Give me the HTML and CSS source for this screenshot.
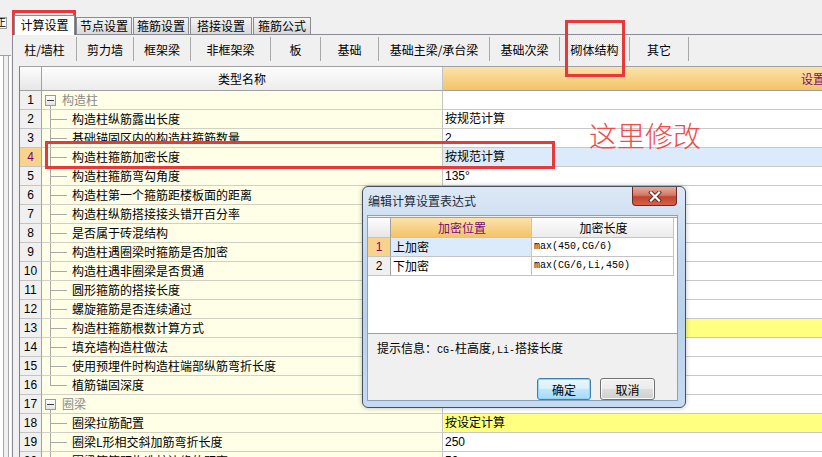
FILE: index.html
```html
<!DOCTYPE html>
<html lang="zh-CN">

<head>
    <meta charset="UTF-8" />
    <title>计算设置</title>
    <link rel="stylesheet" href="styles.css">
</head>

<body>
    <div class="app">
        <div class="side">
            <div class="side-tab">正</div>
            <div class="side-body"></div>
        </div>

        <div class="main">
            <div class="tabs">
                <div class="tab active">计算设置</div>
                <div class="tab w56">节点设置</div>
                <div class="tab w56">箍筋设置</div>
                <div class="tab w62">搭接设置</div>
                <div class="tab w58">箍筋公式</div>
            </div>

            <div class="panel">
                <div class="toolbar">
                    <div class="tool" style="width:64px">柱/墙柱</div>
                    <div class="tool" style="width:57px">剪力墙</div>
                    <div class="tool" style="width:57px">框架梁</div>
                    <div class="tool" style="width:80px">非框架梁</div>
                    <div class="tool" style="width:50px">板</div>
                    <div class="tool" style="width:58px">基础</div>
                    <div class="tool" style="width:111px">基础主梁/承台梁</div>
                    <div class="tool" style="width:70px">基础次梁</div>
                    <div class="tool" style="width:70px"><span class="hot">砌体结构</span></div>
                    <div class="tool" style="width:59px">其它</div>
                </div>

                <div class="grid">
                    <div class="row head">
                        <div class="num"></div>
                        <div class="name">类型名称</div>
                        <div class="val">设置值</div>
                    </div>
                    <div class="row">
                        <div class="num">1</div>
                        <div class="name"><span class="tree g"><i class="box"></i></span><span class="grp">构造柱</span></div>
                        <div class="val"></div>
                    </div>
                    <div class="row">
                        <div class="num">2</div>
                        <div class="name"><span class="tree"></span>构造柱纵筋露出长度</div>
                        <div class="val">按规范计算</div>
                    </div>
                    <div class="row">
                        <div class="num">3</div>
                        <div class="name"><span class="tree"></span>基础锚固区内的构造柱箍筋数量</div>
                        <div class="val">2</div>
                    </div>
                    <div class="row sel">
                        <div class="num">4</div>
                        <div class="name"><span class="tree"></span>构造柱箍筋加密长度</div>
                        <div class="val">按规范计算</div>
                    </div>
                    <div class="row">
                        <div class="num">5</div>
                        <div class="name"><span class="tree"></span>构造柱箍筋弯勾角度</div>
                        <div class="val">135°</div>
                    </div>
                    <div class="row">
                        <div class="num">6</div>
                        <div class="name"><span class="tree"></span>构造柱第一个箍筋距楼板面的距离</div>
                        <div class="val"></div>
                    </div>
                    <div class="row">
                        <div class="num">7</div>
                        <div class="name"><span class="tree"></span>构造柱纵筋搭接接头错开百分率</div>
                        <div class="val"></div>
                    </div>
                    <div class="row">
                        <div class="num">8</div>
                        <div class="name"><span class="tree"></span>是否属于砖混结构</div>
                        <div class="val"></div>
                    </div>
                    <div class="row">
                        <div class="num">9</div>
                        <div class="name"><span class="tree"></span>构造柱遇圈梁时箍筋是否加密</div>
                        <div class="val"></div>
                    </div>
                    <div class="row">
                        <div class="num">10</div>
                        <div class="name"><span class="tree"></span>构造柱遇非圈梁是否贯通</div>
                        <div class="val"></div>
                    </div>
                    <div class="row">
                        <div class="num">11</div>
                        <div class="name"><span class="tree"></span>圆形箍筋的搭接长度</div>
                        <div class="val"></div>
                    </div>
                    <div class="row">
                        <div class="num">12</div>
                        <div class="name"><span class="tree"></span>螺旋箍筋是否连续通过</div>
                        <div class="val"></div>
                    </div>
                    <div class="row">
                        <div class="num">13</div>
                        <div class="name"><span class="tree"></span>构造柱箍筋根数计算方式</div>
                        <div class="val yellow"></div>
                    </div>
                    <div class="row">
                        <div class="num">14</div>
                        <div class="name"><span class="tree"></span>填充墙构造柱做法</div>
                        <div class="val"></div>
                    </div>
                    <div class="row">
                        <div class="num">15</div>
                        <div class="name"><span class="tree"></span>使用预埋件时构造柱端部纵筋弯折长度</div>
                        <div class="val"></div>
                    </div>
                    <div class="row">
                        <div class="num">16</div>
                        <div class="name"><span class="tree last"></span>植筋锚固深度</div>
                        <div class="val"></div>
                    </div>
                    <div class="row">
                        <div class="num">17</div>
                        <div class="name"><span class="tree g"><i class="box"></i></span><span class="grp">圈梁</span></div>
                        <div class="val"></div>
                    </div>
                    <div class="row">
                        <div class="num">18</div>
                        <div class="name"><span class="tree"></span>圈梁拉筋配置</div>
                        <div class="val yellow">按设定计算</div>
                    </div>
                    <div class="row">
                        <div class="num">19</div>
                        <div class="name"><span class="tree"></span>圈梁L形相交斜加筋弯折长度</div>
                        <div class="val">250</div>
                    </div>
                    <div class="row">
                        <div class="num">20</div>
                        <div class="name"><span class="tree"></span>圈梁箍筋距构造柱边缘的距离</div>
                        <div class="val">50</div>
                    </div>
                </div>
            </div>
        </div>
    </div>

    <!-- annotations drawn on top of the screenshot -->
    <div class="mark mark-tab"></div>
    <div class="mark mark-tool"></div>
    <div class="mark mark-row"></div>
    <div class="note">这里修改</div>

    <div class="dialog">
        <div class="dlg-title">
            <span>编辑计算设置表达式</span>
            <div class="dlg-close">
                <svg width="14" height="11" viewBox="0 0 14 11">
                    <path d="M3 1.5 L11 9.5 M11 1.5 L3 9.5" stroke="#5a2a22" stroke-width="4" stroke-linecap="square" />
                    <path d="M3 1.5 L11 9.5 M11 1.5 L3 9.5" stroke="#fff" stroke-width="2.2" stroke-linecap="square" />
                </svg>
            </div>
        </div>
        <div class="dlg-client">
            <div class="dgrid">
                <div class="drow dhead">
                    <div class="dnum"></div>
                    <div class="dc1">加密位置</div>
                    <div class="dc2">加密长度</div>
                </div>
                <div class="drow">
                    <div class="dnum on">1</div>
                    <div class="dc1 on">上加密</div>
                    <div class="dc2 mono">max(450,CG/6)</div>
                </div>
                <div class="drow">
                    <div class="dnum">2</div>
                    <div class="dc1">下加密</div>
                    <div class="dc2 mono">max(CG/6,Li,450)</div>
                </div>
            </div>
            <div class="hint">提示信息：<span class="m">CG-</span>柱高度<span class="m">,Li-</span>搭接长度</div>
            <div class="dlg-btns">
                <button class="btn ok">确定</button>
                <button class="btn">取消</button>
            </div>
        </div>
    </div>
</body>

</html>
```

FILE: styles.css
```css
* {
    box-sizing: border-box;
}

body {
    margin: 0;
    width: 822px;
    height: 457px;
    overflow: hidden;
    background-color: #f0f0f0;
    color: #000;
    font-family: "Liberation Sans", "Noto Sans CJK SC", sans-serif;
    font-size: 12px;
}

.app {
    display: flex;
    height: 457px;
}

/* left neighbour panel */
.side {
    width: 12px;
    flex: none;
}

.side-tab {
    margin-top: 17px;
    width: 7px;
    height: 12px;
    border: 1px solid #a0a0a0;
    border-left: none;
    background: #fafafa;
    overflow: hidden;
    font-size: 10px;
    line-height: 10px;
    text-indent: -4px;
}

.side-body {
    margin-top: 26px;
    height: 420px;
    width: 11px;
    border-top: 1px solid #a0a0a0;
    background: linear-gradient(to right, #fff 0 3px, #a8a8a8 3px 4px, #f0f0f0 4px 8px, #a8a8a8 8px 9px, #fff 9px 11px);
}

.main {
    flex: 1;
    min-width: 0;
    min-height: 0;
    display: flex;
    flex-direction: column;
}

/* tabs */
.tabs {
    height: 34px;
    flex: none;
    display: flex;
    align-items: flex-end;
    padding-left: 2px;
    position: relative;
    z-index: 1;
}

.tab {
    height: 17px;
    margin-left: 1px;
    border: 1px solid #898c95;
    border-bottom: none;
    background: linear-gradient(#f4f4f4, #e6e6e6 50%, #d9d9d9);
    text-align: center;
    font-family: "Noto Sans CJK SC", sans-serif;
    line-height: 16px;
}

.tab.active {
    width: 61px;
    height: 20px;
    margin-left: 0;
    margin-bottom: -1px;
    background: #fff;
    line-height: 18px;
}

.w56 { width: 56px; }
.w58 { width: 58px; }
.w62 { width: 62px; }

.panel {
    flex: 1;
    min-height: 0;
    border-top: 1px solid #898c95;
    border-left: 1px solid #898c95;
    display: flex;
    flex-direction: column;
}

/* second row of buttons */
.toolbar {
    height: 31px;
    display: flex;
    align-items: flex-start;
    padding-top: 2px;
    flex: none;
}

.tool {
    height: 24px;
    flex: none;
    border-right: 1px solid #a8a8a8;
    display: flex;
    align-items: center;
    justify-content: center;
    font-family: "Noto Sans CJK SC", sans-serif;
}

.hot {
    width: 56px;
    height: 21px;
    line-height: 21px;
    text-align: center;
    background: repeating-conic-gradient(#fcfcfc 0 25%, #e4e4e4 0 50%) 0 0 / 2px 2px;
}

/* main table */
.grid {
    margin-left: 6px;
    flex: 1;
    min-height: 0;
    border-top: 1px solid #a0a0a0;
    border-left: 1px solid #808080;
    overflow: hidden;
}

.row {
    display: flex;
    height: 19px;
}

.row.head {
    height: 24px;
}

.num {
    width: 22px;
    flex: none;
    background: #f0f0f0;
    border-right: 1px solid #a0a0a0;
    border-bottom: 1px solid #c4c4c4;
    text-align: center;
    line-height: 18px;
}

.name {
    width: 401px;
    flex: none;
    display: flex;
    background: #fffee6;
    border-right: 1px solid #c4c4c4;
    border-bottom: 1px solid #d0d0c4;
    font-family: "Noto Sans CJK SC", sans-serif;
    line-height: 18px;
    white-space: nowrap;
    overflow: hidden;
}

.val {
    width: 750px;
    flex: none;
    background: #fff;
    border-bottom: 1px solid #c8c8c8;
    padding-left: 2px;
    line-height: 18px;
    white-space: nowrap;
}

.head .num {
    background: linear-gradient(#fdfdfd, #e6e6e6);
    border-bottom-color: #a0a0a0;
}

.head .name {
    justify-content: center;
    background: linear-gradient(#fdfdfd, #ececec);
    border-bottom-color: #a0a0a0;
    line-height: 23px;
}

.head .val {
    text-align: center;
    background: linear-gradient(#fbe2ac, #f3c466);
    border-bottom-color: #a0a0a0;
    color: #7a0a7a;
    font-family: "Noto Sans CJK SC", sans-serif;
    line-height: 23px;
}

.sel .num {
    background: #f8d38c;
    color: #800080;
}

.sel .val {
    background: #dcebfc;
}

.val.yellow {
    background: #ffff80;
}

/* tree lines in the name column */
.tree {
    width: 30px;
    flex: none;
    background:
        linear-gradient(#a8a8a8, #a8a8a8) 8px 0 / 1px 100% no-repeat,
        linear-gradient(#a8a8a8, #a8a8a8) 8px 9px / 17px 1px no-repeat;
}

.tree.last {
    background:
        linear-gradient(#a8a8a8, #a8a8a8) 8px 0 / 1px 10px no-repeat,
        linear-gradient(#a8a8a8, #a8a8a8) 8px 9px / 17px 1px no-repeat;
}

.tree.g {
    width: 20px;
    background: linear-gradient(#a8a8a8, #a8a8a8) 8px 15px / 1px 3px no-repeat;
}

.box {
    display: block;
    margin: 4px 0 0 3px;
    width: 11px;
    height: 11px;
    border: 1px solid #9a9a9a;
    background:
        linear-gradient(#3c3c3c, #3c3c3c) center / 7px 1px no-repeat,
        linear-gradient(#fff, #e2e2e2);
}

.grp {
    color: #8a8a8a;
}

/* red annotations */
.mark {
    position: absolute;
    border: 3px solid #e8383a;
}

.mark-tab {
    left: 12px;
    top: 10px;
    width: 64px;
    height: 25px;
}

.mark-tool {
    left: 565px;
    top: 20px;
    width: 60px;
    height: 57px;
}

.mark-row {
    left: 45px;
    top: 141px;
    width: 510px;
    height: 28px;
}

.note {
    position: absolute;
    left: 589px;
    top: 120px;
    font-family: "Noto Sans CJK SC", sans-serif;
    font-weight: 300;
    font-size: 28px;
    line-height: 30px;
    color: #f24a4a;
}

/* dialog */
.dialog {
    position: absolute;
    left: 362px;
    top: 186px;
    width: 324px;
    height: 222px;
    border: 1px solid #44505e;
    border-radius: 6px;
    background: linear-gradient(#dce8f5, #c3d8ef 30%, #b9d1ea 60%, #c6dbf1);
    padding: 0 7px 7px 4px;
    display: flex;
    flex-direction: column;
    box-shadow: 0 0 5px rgba(0, 0, 0, 0.25);
    font-family: "Noto Sans CJK SC", sans-serif;
}

.dlg-title {
    height: 28px;
    flex: none;
    display: flex;
    align-items: flex-start;
}

.dlg-title span {
    margin-top: 7px;
    margin-left: 1px;
    line-height: 14px;
    color: #1e2a38;
}

.dlg-close {
    margin-left: auto;
    margin-right: 1px;
    width: 45px;
    height: 19px;
    border: 1px solid #6b2b22;
    border-top: none;
    border-radius: 0 0 4px 4px;
    background: linear-gradient(#e9a899, #d47a68 45%, #c2432c 55%, #d2634c);
    display: flex;
    align-items: center;
    justify-content: center;
}

.dlg-client {
    flex: 1;
    background: #f0f0f0;
    border: 1px solid #8aa0bb;
    display: flex;
    flex-direction: column;
}

.dgrid {
    margin-top: 1px;
    height: 117px;
    flex: none;
    background: #fff;
    border-top: 1px solid #a0a0a0;
    border-bottom: 1px solid #a0a0a0;
}

.drow {
    display: flex;
    height: 19px;
}

.drow.dhead {
    height: 20px;
}

.dnum {
    width: 23px;
    flex: none;
    background: #f0f0f0;
    border-right: 1px solid #a0a0a0;
    border-bottom: 1px solid #c4c4c4;
    text-align: center;
    font-family: "Liberation Sans", sans-serif;
    line-height: 18px;
}

.dc1,
.dc2 {
    flex: none;
    border-right: 1px solid #c4c4c4;
    border-bottom: 1px solid #c4c4c4;
    padding-left: 2px;
    line-height: 18px;
    white-space: nowrap;
}

.dc1 {
    width: 141px;
}

.dc2 {
    width: 142px;
}

.dhead .dnum {
    background: linear-gradient(#fdfdfd, #e6e6e6);
}

.dhead .dc1 {
    text-align: center;
    background: linear-gradient(#fbe2ac, #f3c466);
    color: #7a0a7a;
    line-height: 19px;
}

.dhead .dc2 {
    text-align: center;
    background: linear-gradient(#fdfdfd, #ebebeb);
    line-height: 19px;
}

.dnum.on {
    background: #f8d38c;
    color: #800080;
}

.dc1.on {
    background: #dcebfc;
}

.mono {
    font-family: "Liberation Mono", monospace;
    font-size: 10px;
}

.hint {
    margin-top: 7px;
    padding-left: 9px;
    line-height: 14px;
}

.m {
    font-family: "Liberation Mono", monospace;
    font-size: 10px;
}

.dlg-btns {
    margin-top: 20px;
    display: flex;
    justify-content: flex-end;
    gap: 9px;
    padding-right: 22px;
}

.btn {
    width: 55px;
    height: 22px;
    padding: 0;
    border: 1px solid #707070;
    border-radius: 3px;
    background: linear-gradient(#f2f2f2, #ebebeb 50%, #dddddd 50%, #cfcfcf);
    font-family: "Noto Sans CJK SC", sans-serif;
    font-size: 12px;
    color: #000;
    box-shadow: inset 0 0 0 1px #fcfcfc;
}

.btn.ok {
    width: 54px;
    border-color: #3c7fb1;
    background: linear-gradient(#eaf6fd, #d9f0fc 50%, #bee6fd 50%, #a7d9f5);
    box-shadow: inset 0 0 0 1px #8fd3f7;
}
```
